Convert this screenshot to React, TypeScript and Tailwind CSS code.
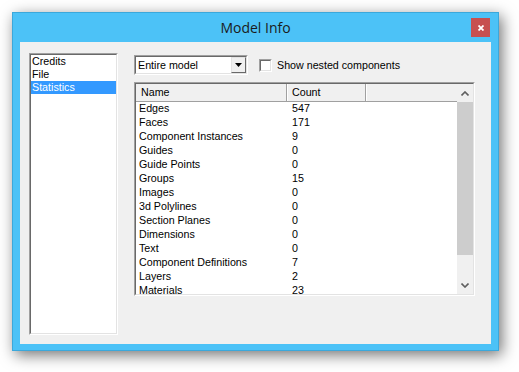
import React from 'react'

const stats: [string, string][] = [
  ['Edges', '547'],
  ['Faces', '171'],
  ['Component Instances', '9'],
  ['Guides', '0'],
  ['Guide Points', '0'],
  ['Groups', '15'],
  ['Images', '0'],
  ['3d Polylines', '0'],
  ['Section Planes', '0'],
  ['Dimensions', '0'],
  ['Text', '0'],
  ['Component Definitions', '7'],
  ['Layers', '2'],
  ['Materials', '23'],
]

const pages = ['Credits', 'File', 'Statistics']

function Chevron({ down }: { down?: boolean }) {
  return (
    <svg width="8" height="5" viewBox="0 0 8 5" className={down ? 'rotate-180' : ''}>
      <path d="M0.5 4.5 L4 1 L7.5 4.5" fill="none" stroke="#5f5f5f" strokeWidth="1.6" />
    </svg>
  )
}

export default function App() {
  return (
    <div className="w-[519px] h-[372px] bg-white pl-3 pt-3 font-['Liberation_Sans',Arial,sans-serif] text-[10.7px] text-black">
      <div className="w-[487px] h-[339px] flex flex-col bg-[#4cc2f7] border border-[#3ba8db] shadow-[3px_4px_14px_rgba(0,0,0,0.55)]">
        {/* Title bar */}
        <div className="h-[29px] grid grid-cols-[1fr_auto_1fr] items-center">
          <div />
          <div className="font-['Open_Sans',sans-serif] text-[14px] text-[#1b1b1b] leading-none">Model Info</div>
          <div className="flex justify-end self-start pt-[5px] pr-[8px]">
            <button className="w-[19px] h-[19px] bg-[#c75050] flex items-center justify-center">
              <svg width="6" height="6" viewBox="0 0 6 6">
                <path d="M0.5 0.5 L5.5 5.5 M5.5 0.5 L0.5 5.5" stroke="white" strokeWidth="1.8" />
              </svg>
            </button>
          </div>
        </div>

        {/* Client area */}
        <div className="flex-1 mx-[7px] mb-[6px] bg-[#f0f0f0] pt-[11px] pl-[9px] flex gap-[16px]">
          {/* Pages list */}
          <div className="w-[89px] h-[282px] border-t border-l border-t-[#a0a0a0] border-l-[#a0a0a0] border-b border-r border-b-white border-r-white">
            <div className="h-full bg-white border-t border-l border-t-[#696969] border-l-[#696969] border-b border-r border-b-[#e3e3e3] border-r-[#e3e3e3]">
              {pages.map((p) => (
                <div
                  key={p}
                  className={`h-[13px] leading-[13px] pl-[1px] ${
                    p === 'Statistics' ? 'bg-[#3399ff] text-white' : ''
                  }`}
                >
                  {p}
                </div>
              ))}
            </div>
          </div>

          <div className="pt-[2px]">
            {/* Scope + nested toggle */}
            <div className="flex items-center h-[20px]">
              <div className="w-[114px] h-[20px] border-t border-l border-t-[#a0a0a0] border-l-[#a0a0a0] border-b border-r border-b-white border-r-white">
                <div className="h-full bg-white flex items-center border-t border-l border-t-[#696969] border-l-[#696969] border-b border-r border-b-[#e3e3e3] border-r-[#e3e3e3]">
                  <span className="flex-1 pl-[2px]">Entire model</span>
                  <div className="w-[15px] h-full bg-[#f0f0f0] flex items-center justify-center border-t border-l border-t-[#e3e3e3] border-l-[#e3e3e3] border-b border-r border-b-[#696969] border-r-[#696969]">
                    <svg width="7" height="4" viewBox="0 0 7 4">
                      <path d="M0 0 H7 L3.5 4 Z" fill="#000" />
                    </svg>
                  </div>
                </div>
              </div>
              <div className="ml-[11px] w-[13px] h-[13px] border-t border-l border-t-[#a0a0a0] border-l-[#a0a0a0] border-b border-r border-b-white border-r-white">
                <div className="h-full bg-white border-t border-l border-t-[#696969] border-l-[#696969] border-b border-r border-b-[#e3e3e3] border-r-[#e3e3e3]" />
              </div>
              <span className="ml-[5px]">Show nested components</span>
            </div>

            {/* Statistics list view */}
            <div className="mt-[7px] w-[341px] h-[214px] border-t border-l border-t-[#a0a0a0] border-l-[#a0a0a0] border-b border-r border-b-white border-r-white">
              <div className="h-full bg-white flex overflow-hidden border-t border-l border-t-[#696969] border-l-[#696969] border-b border-r border-b-[#e3e3e3] border-r-[#e3e3e3]">
                <div className="flex-1 flex flex-col">
                  <div className="h-[18px] flex bg-[#f0f0f0] border-b border-[#a0a0a0] leading-[17px]">
                    <div className="w-[151px] pl-[5px] border-r border-r-[#a0a0a0] shadow-[1px_0_0_white]">Name</div>
                    <div className="w-[79px] pl-[5px] border-r border-r-[#a0a0a0] shadow-[1px_0_0_white]">Count</div>
                    <div className="flex-1" />
                  </div>
                  {stats.map(([name, count]) => (
                    <div key={name} className="h-[14px] leading-[13px] flex shrink-0">
                      <div className="w-[151px] pl-[3px] whitespace-nowrap">{name}</div>
                      <div className="pl-[5px]">{count}</div>
                    </div>
                  ))}
                </div>
                <div className="w-[16px] flex flex-col bg-[#f0f0f0]">
                  <div className="h-[18px] flex items-center justify-center">
                    <Chevron />
                  </div>
                  <div className="h-[153px] bg-[#cdcdcd]" />
                  <div className="flex-1" />
                  <div className="h-[17px] flex items-center justify-center">
                    <Chevron down />
                  </div>
                </div>
              </div>
            </div>
          </div>
        </div>
      </div>
    </div>
  )
}
